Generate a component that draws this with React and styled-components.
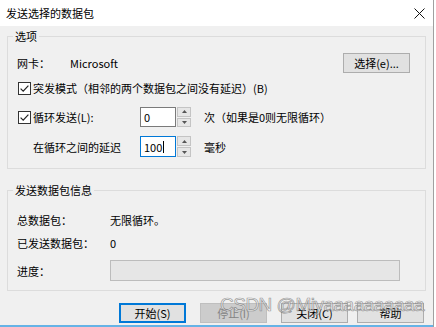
import React from 'react'
import styled, { createGlobalStyle } from 'styled-components'

const Global = createGlobalStyle`
	html, body {
		margin: 0;
		background: #fff;
	}
	body {
		font-family: "Noto Sans CJK SC", "Noto Sans", sans-serif;
		font-size: 11px;
		color: #000;
	}
`

const Dialog = styled.div`
	position: relative;
	width: 433px;
	height: 327px;
	background: #f0f0f0;
	border-right: 1px solid #a0a0a0;
	display: flex;
	flex-direction: column;
	overflow: hidden;
`,

	TitleBar = styled.div`
		height: 26px;
		flex: none;
		display: flex;
		align-items: center;
		justify-content: space-between;
		padding: 0 8px 0 6px;
		background: #fff;
		line-height: 14px;
	`,

	Body = styled.div`
		flex: 1;
		display: flex;
		flex-direction: column;
		padding: 0 7px;
	`,

	Group = styled.fieldset`
		margin: ${props => props.$mt}px 0 0;
		padding: 0 15px ${props => props.$pb}px 9px;
		border: 1px solid #dcdcdc;
		min-width: 0;
	`,

	Legend = styled.legend`
		margin-left: -4px;
		padding: 0 2px;
		line-height: 16px;
		color: #000;
	`,

	Row = styled.div`
		display: flex;
		align-items: center;
		height: ${props => props.$h}px;
		margin-top: ${props => props.$mt}px;
		line-height: 14px;
		white-space: nowrap;
	`,

	Label = styled.span`
		flex: none;
		width: ${props => props.$w}px;
		padding-left: ${props => props.$indent || 0}px;
		box-sizing: border-box;
		display: flex;
		align-items: center;
	`,

	Box = styled.span`
		display: inline-flex;
		margin: 0 2px 0 1px;
	`,

	Button = styled.button`
		flex: none;
		width: 67px;
		height: 20px;
		margin-left: ${props => props.$push ? 'auto' : `${props.$ml || 0}px`};
		padding: 0;
		font: inherit;
		line-height: 14px;
		color: ${props => props.disabled ? '#838383' : '#000'};
		background: ${props => props.disabled ? '#cccccc' : '#e1e1e1'};
		border: 1px solid ${props => props.$primary ? '#0078d7' : props.disabled ? '#bfbfbf' : '#adadad'};
		box-shadow: ${props => props.$primary ? 'inset 0 0 0 1px #0078d7' : 'none'};
	`,

	Spin = styled.div`
		display: flex;
		flex: none;
		height: ${props => props.$h}px;
	`,

	Field = styled.div`
		width: 36px;
		box-sizing: border-box;
		border: 1px solid ${props => props.$focus ? '#0078d7' : '#7a7a7a'};
		background: #fff;
		display: flex;
		align-items: center;
		padding-left: 3px;
	`,

	Caret = styled.span`
		display: inline-block;
		width: 1px;
		height: 12px;
		background: #000;
		margin-left: 1px;
	`,

	Arrows = styled.div`
		width: 14px;
		margin-left: 1px;
		display: flex;
		flex-direction: column;
		gap: 1px;
	`,

	Arrow = styled.div`
		flex: 1;
		background: #e6e6e6;
		border: 1px solid #c4c4c4;
		display: flex;
		align-items: center;
		justify-content: center;
	`,

	Unit = styled.span`
		margin-left: 13px;
	`,

	Bar = styled.div`
		width: 290px;
		height: 100%;
		box-sizing: border-box;
		background: #e6e6e6;
		border: 1px solid #bcbcbc;
	`,

	Buttons = styled.div`
		display: flex;
		margin-top: 12px;
		padding-left: 112px;
	`,

	Strip = styled.div`
		margin-top: auto;
		height: 2px;
		background: #66b3e6;
	`,

	Watermark = styled.div`
		position: absolute;
		left: 220px;
		top: 294px;
		font-family: "Liberation Sans", Arial, sans-serif;
		font-size: 19px;
		letter-spacing: -0.5px;
		color: rgba(255, 255, 255, 0.55);
		-webkit-text-stroke: 0.7px rgba(110, 110, 110, 0.7);
		pointer-events: none;
		white-space: nowrap;
	`

const Check = () => (
	<Box>
		<svg width='13' height='13' viewBox='0 0 13 13'>
			<rect x='0.5' y='0.5' width='12' height='12' fill='#fff' stroke='#333' />
			<path d='M2.6 6.6 L5.2 9.2 L10.4 3.6' fill='none' stroke='#222' strokeWidth='1.2' />
		</svg>
	</Box>
)

const SpinBox = ({ value, focus, h }) => (
	<Spin $h={h}>
		<Field $focus={focus}>{value}{focus && <Caret />}</Field>
		<Arrows>
			<Arrow>
				<svg width='5' height='3' viewBox='0 0 5 3'><path d='M0 3 L2.5 0 L5 3 Z' fill='#555' /></svg>
			</Arrow>
			<Arrow>
				<svg width='5' height='3' viewBox='0 0 5 3'><path d='M0 0 L2.5 3 L5 0 Z' fill='#555' /></svg>
			</Arrow>
		</Arrows>
	</Spin>
)

const App = () => (
	<Dialog>
		<Global />
		<TitleBar>
			<span>发送选择的数据包</span>
			<svg width='11' height='11' viewBox='0 0 11 11'>
				<path d='M0.5 0.5 L10.5 10.5 M10.5 0.5 L0.5 10.5' stroke='#111' strokeWidth='1' />
			</svg>
		</TitleBar>
		<Body>
			<Group $mt={2} $pb={11}>
				<Legend>选项</Legend>
				<Row $h={20} $mt={9}>
					<Label $w={53}>网卡：</Label>
					<span>Microsoft</span>
					<Button $push>选择(e)...</Button>
				</Row>
				<Row $h={18} $mt={6}>
					<Check />
					<span>突发模式（相邻的两个数据包之间没有延迟）(B)</span>
				</Row>
				<Row $h={20} $mt={10}>
					<Label $w={123}><Check />循环发送(L):</Label>
					<SpinBox value='0' h={20} />
					<Unit>次（如果是0则无限循环）</Unit>
				</Row>
				<Row $h={21} $mt={9}>
					<Label $w={123} $indent={16}>在循环之间的延迟</Label>
					<SpinBox value='100' focus h={21} />
					<Unit>毫秒</Unit>
				</Row>
			</Group>
			<Group $mt={13} $pb={9}>
				<Legend>发送数据包信息</Legend>
				<Row $h={16} $mt={14}>
					<Label $w={93}>总数据包：</Label>
					<span>无限循环。</span>
				</Row>
				<Row $h={16} $mt={7}>
					<Label $w={93}>已发送数据包：</Label>
					<span>0</span>
				</Row>
				<Row $h={21} $mt={9}>
					<Label $w={93}>进度：</Label>
					<Bar />
				</Row>
			</Group>
			<Buttons>
				<Button $primary>开始(S)</Button>
				<Button $ml={14} disabled>停止(I)</Button>
				<Button $ml={14}>关闭(C)</Button>
				<Button $ml={9}>帮助</Button>
			</Buttons>
		</Body>
		<Strip />
		<Watermark>CSDN @Miyaaaaaaaaaa</Watermark>
	</Dialog>
)

export default App
